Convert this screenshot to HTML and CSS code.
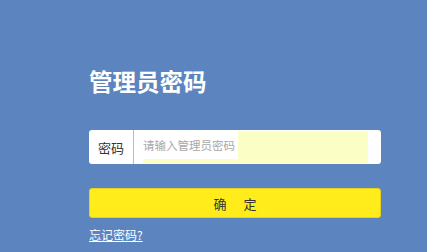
FILE: index.html
```html
<!DOCTYPE html>
<html lang="zh-CN">
<head>
    <meta charset="UTF-8">
    <meta name="viewport" content="width=device-width, initial-scale=1.0">
    <title>管理员密码</title>
    <link rel="stylesheet" href="styles.css">
</head>
<body>
    <div class="login">
        <h1 class="login-title">管理员密码</h1>

        <div class="pwd-row">
            <span class="pwd-label">密码</span>
            <div class="pwd-field">
                <span class="pwd-hint">请输入管理员密码</span>
                <span class="pwd-fill"></span>
            </div>
        </div>

        <button class="btn-ok">确<span class="gap"></span>定</button>

        <a class="forgot" href="#">忘记密码?</a>
    </div>
</body>
</html>
```

FILE: styles.css
```css
body {
    margin: 0;
    padding: 0;
    background-color: #5c85c0;
    font-family: "Noto Sans CJK SC", "Liberation Sans", sans-serif;
    height: 252px;
    overflow: hidden;
}

.login {
    width: 292px;
    margin-left: 89px;
    padding-top: 64px;
    display: flex;
    flex-direction: column;
}

.login-title {
    margin: 0;
    color: #ffffff;
    font-size: 23.5px;
    font-weight: bold;
    line-height: 34px;
}

.pwd-row {
    margin-top: 32px;
    height: 34px;
    display: flex;
    background-color: #ffffff;
    border-radius: 3px;
    overflow: hidden;
}

.pwd-label {
    width: 44px;
    flex-shrink: 0;
    border-right: 1px solid #a9c0e4;
    font-size: 13px;
    color: #333333;
    display: flex;
    align-items: center;
    justify-content: center;
}

.pwd-field {
    flex: 1;
    display: flex;
    padding: 1px 13px 1px 9px;
}

.pwd-hint {
    font-size: 11.5px;
    color: #a8a8a8;
    line-height: 28px;
    background-color: #ffffff;
    box-shadow: 0 4px 0 #fbfec5;
    height: 28px;
    padding-right: 3px;
}

.pwd-fill {
    flex: 1;
    background-color: #fbfec5;
}

.btn-ok {
    margin-top: 24px;
    height: 30px;
    border: 1px solid #e6d21a;
    border-radius: 3px;
    background-color: #ffec1a;
    color: #333333;
    font-family: inherit;
    font-size: 13px;
    display: flex;
    align-items: center;
    justify-content: center;
    padding: 0;
}

.btn-ok .gap {
    display: inline-block;
    width: 17px;
}

.forgot {
    margin-top: 9px;
    align-self: flex-start;
    font-size: 12px;
    line-height: 16px;
    color: #ffffff;
}
```
